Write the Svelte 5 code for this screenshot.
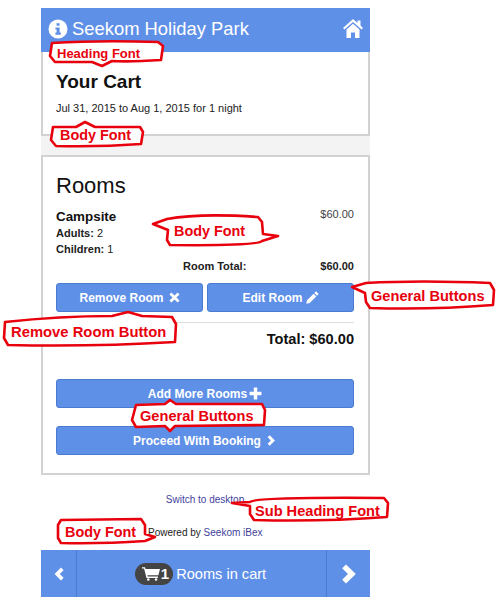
<script>
  // red callouts drawn over the page: outline, label position and label size
  const callouts = [
    { d: 'M52 43 Q100 40 158 42 L163 46 L161 60 Q130 62 112 61 L102 66 L92 62 L55 62 L50 56 Z', x: 57, y: 58, size: 13, t: 'Heading Font' },
    { d: 'M53 127 L76 127 L85 122 L95 127 L140 127 L143 132 L141 144 Q100 147 56 146 L51 140 Z', x: 60, y: 140, size: 14.4, t: 'Body Font' },
    { d: 'M153 224 L167 219 Q200 213 258 217 L262 222 L263 234 L278 236 L262 241 Q258 246 170 245 L167 240 L168 230 Z', x: 174, y: 236, size: 14.4, t: 'Body Font' },
    { d: 'M352 287 L366 283 Q420 280 490 283 L494 290 L493 305 Q430 310 370 308 L366 302 L365 293 Z', x: 371, y: 301, size: 14.6, t: 'General Buttons' },
    { d: 'M5 322 Q60 316 112 316 L128 312 L142 316 L172 317 L176 324 L175 342 Q90 347 8 345 L4 338 Z', x: 11, y: 337, size: 14.8, t: 'Remove Room Button' },
    { d: 'M136 405 L165 404 L170 400 L176 404 L262 404 L265 410 L264 425 L175 426 L170 431 L165 426 L136 427 L132 420 Z', x: 140, y: 421, size: 14.6, t: 'General Buttons' },
    { d: 'M232 503 L250 502 Q254 497 384 498 L388 503 L387 517 Q320 522 254 520 L250 514 L250 506 Z', x: 255, y: 516, size: 14.6, t: 'Sub Heading Font' },
    { d: 'M61 520 L141 519 L145 525 L145 534 L155 537 L145 541 Q100 544 61 543 L58 538 L58 525 Z', x: 65, y: 537, size: 14.4, t: 'Body Font' },
  ];
</script>

<div class="page">
  <header class="top">
    <svg class="info" viewBox="0 0 20 20">
      <circle cx="10" cy="10" r="9.5" fill="#fff" />
      <path d="M8.6 4.2h3v2.6h-3zM7.4 8.4h4.2v5.2h1.2v2.1H7.4v-2.1h1.2v-3.1H7.4z" fill="#5f90e8" />
    </svg>
    <span class="title">Seekom Holiday Park</span>
    <svg class="home" viewBox="0 0 20 19">
      <path d="M10 0 14.5 4V1.5H17.5V6.6L20 9 18.6 10.6 10 3 1.4 10.6 0 9Z M3.5 10.6 10 4.8l6.5 5.8V19H12v-5.5H8V19H3.5Z" fill="#fff" />
    </svg>
  </header>

  <section class="card intro">
    <h1>Your Cart</h1>
    <p>Jul 31, 2015 to Aug 1, 2015 for 1 night</p>
  </section>

  <div class="band"></div>

  <section class="card rooms">
    <h2>Rooms</h2>
    <div class="room">
      <div>
        <div class="name">Campsite</div>
        <div class="guest"><b>Adults:</b> 2</div>
        <div class="guest"><b>Children:</b> 1</div>
      </div>
      <div class="price">$60.00</div>
    </div>
    <div class="room-total">
      <span>Room Total:</span>
      <span>$60.00</span>
    </div>
    <div class="btn-row">
      <button class="btn">
        Remove Room
        <svg class="ico" viewBox="0 0 12 12"><path d="M2.6.5 6 3.9 9.4.5l2.1 2.1L8.1 6l3.4 3.4-2.1 2.1L6 8.1l-3.4 3.4L.5 9.4 3.9 6 .5 2.6Z" fill="#fff" /></svg>
      </button>
      <button class="btn">
        Edit Room
        <svg class="ico pencil" viewBox="0 0 12 12"><path d="M9.2.3 11.7 2.8 10.2 4.3 7.7 1.8ZM7 2.5 9.5 5 3.4 11.1.3 11.7.9 8.6Z" fill="#fff" /></svg>
      </button>
    </div>
    <div class="total">Total: $60.00</div>
    <button class="btn wide add">
      Add More Rooms
      <svg class="ico plus" viewBox="0 0 12 12"><path d="M4.4.5h3.2v3.9h3.9v3.2H7.6v3.9H4.4V7.6H.5V4.4h3.9Z" fill="#fff" /></svg>
    </button>
    <button class="btn wide">
      Proceed With Booking
      <svg class="ico" viewBox="0 0 12 12"><path d="M4 .3 9.8 6 4 11.7 1.8 9.5 5.3 6 1.8 2.5Z" fill="#fff" /></svg>
    </button>
  </section>

  <div class="switch"><a href="#top">Switch to desktop</a></div>
  <div class="powered">Powered by <a href="#top">Seekom iBex</a></div>

  <footer class="cartbar">
    <div class="nav">
      <svg class="prev" viewBox="0 0 12 14"><path d="M8 .6 10.6 3.2 6.8 7l3.8 3.8L8 13.4 1.6 7Z" fill="#fff" /></svg>
    </div>
    <div class="mid">
      <span class="badge">
        <svg class="cart" viewBox="0 0 20 16">
          <path d="M0 1h3.4l.5 2H20l-1.8 7H6l.3 1.4h11.4v1.5H5L2.3 2.5H0Z" fill="#fff" />
          <circle cx="7" cy="14.6" r="1.4" fill="#fff" />
          <circle cx="15.6" cy="14.6" r="1.4" fill="#fff" />
        </svg>
        <b>1</b>
      </span>
      <span class="label">Rooms in cart</span>
    </div>
    <div class="nav right">
      <svg class="next" viewBox="0 0 16 20"><path d="M5 .5 14.8 10 5 19.5 1.2 15.8 7 10 1.2 4.2Z" fill="#fff" /></svg>
    </div>
  </footer>
</div>

<svg class="notes" viewBox="0 0 500 602">
  {#each callouts as c}
    <path d={c.d} fill="#fff" stroke="#e8000d" stroke-width="2.6" stroke-linejoin="round" />
    <text x={c.x} y={c.y} font-size={c.size}>{c.t}</text>
  {/each}
</svg>

<style>
  :global(body) {
    background: #fff;
    font-family: "Liberation Sans", Arial, sans-serif;
    color: #222;
  }
  .page {
    width: 329px;
    height: 602px;
    margin-left: 41px;
    padding-top: 8px;
    box-sizing: border-box;
    font-size: 11px;
  }
  .top {
    height: 44px;
    box-sizing: border-box;
    background: #5f90e8;
    display: flex;
    align-items: center;
    padding: 0 7px 3px;
    color: #fff;
  }
  .info { width: 20px; height: 20px; margin-right: 4px; }
  .title { font-size: 18.4px; flex: 1; }
  .home { width: 20px; height: 19px; }
  .card {
    border: 2px solid #d2d2d2;
    background: #fff;
    box-sizing: border-box;
  }
  .intro {
    height: 84px;
    border-top: 0;
    padding: 19px 13px 0;
  }
  h1 { margin: 0; font-size: 19px; line-height: 22px; color: #111; }
  .intro p { margin: 8px 0 0; font-size: 11px; line-height: 14px; }
  .band { height: 19px; background: #f3f3f3; }
  .rooms { height: 320px; padding: 15px 14px 0 13px; }
  h2 { margin: 0; font-size: 22px; font-weight: 400; line-height: 28px; color: #111; }
  .room {
    display: flex;
    justify-content: space-between;
    margin-top: 7px;
  }
  .name { font-size: 13.4px; font-weight: 700; line-height: 16px; margin-top: 2px; color: #111; }
  .guest { line-height: 16px; }
  .price { color: #444; line-height: 16px; margin-top: -1px; }
  .room-total {
    display: flex;
    justify-content: space-between;
    font-weight: 700;
    line-height: 16px;
    margin-top: 1px;
    padding-left: 127px;
  }
  .btn-row { display: flex; gap: 4px; margin-top: 9px; padding-bottom: 10px; border-bottom: 1px solid #ddd; }
  .btn {
    flex: 1;
    height: 29px;
    display: flex;
    align-items: center;
    justify-content: center;
    gap: 5px;
    padding: 0;
    background: #5f90e8;
    border: 1px solid #4a7bd0;
    border-radius: 3px;
    color: #fff;
    font: 700 12px "Liberation Sans", Arial, sans-serif;
  }
  .ico { width: 11px; height: 11px; }
  .pencil { width: 13px; height: 13px; margin-left: -2px; }
  .plus { width: 13px; height: 13px; margin-left: -3px; }
  .wide { width: 100%; flex: none; margin-top: 18px; }
  .add { margin-top: 31px; }
  .total {
    text-align: right;
    font-size: 14.6px;
    font-weight: 700;
    line-height: 18px;
    margin-top: 7px;
    color: #111;
  }
  .switch { text-align: center; margin-top: 19px; font-size: 10px; line-height: 12px; }
  .switch a { color: #3f3f9c; text-decoration: none; margin-right: 1px; }
  .powered { margin-top: 21px; padding-left: 107px; font-size: 10px; line-height: 12px; color: #222; }
  .powered a { color: #3f3f9c; text-decoration: none; }
  .cartbar {
    margin-top: 11px;
    height: 47px;
    display: flex;
    background: #5f90e8;
    color: #fff;
  }
  .nav {
    width: 35px;
    display: flex;
    align-items: center;
    justify-content: center;
    border-right: 1px solid #4a7bd0;
  }
  .nav.right { width: 43px; border-right: 0; border-left: 1px solid #4a7bd0; }
  .prev { width: 12px; height: 14px; }
  .next { width: 16px; height: 20px; }
  .mid {
    flex: 1;
    display: flex;
    align-items: center;
    justify-content: center;
    gap: 3px;
    padding-right: 2px;
  }
  .badge {
    display: flex;
    align-items: center;
    gap: 1px;
    height: 22px;
    padding: 0 4px 0 7px;
    background: #444;
    border-radius: 11px;
  }
  .cart { width: 18px; height: 15px; }
  .badge b { font-size: 15px; }
  .label { font-size: 14.6px; }
  .notes {
    position: absolute;
    left: 0;
    top: 0;
    width: 500px;
    height: 602px;
    pointer-events: none;
  }
  .notes text {
    font-family: "Liberation Sans", Arial, sans-serif;
    font-weight: 700;
    fill: #e8000d;
  }
</style>
